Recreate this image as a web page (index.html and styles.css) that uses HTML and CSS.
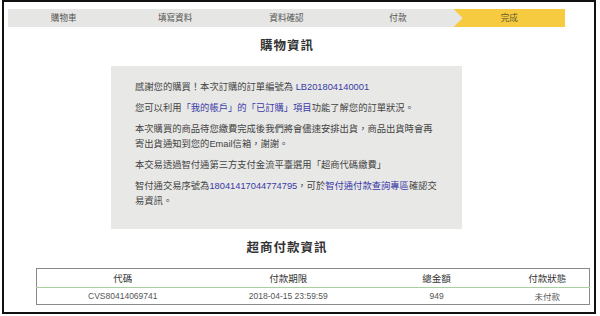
FILE: index.html
```html
<!DOCTYPE html>
<html lang="zh-Hant">
<head>
    <meta charset="UTF-8">
    <meta name="viewport" content="width=device-width, initial-scale=1.0">
    <title>購物資訊</title>
    <link rel="stylesheet" href="styles.css">
</head>
<body>
    <div class="frame">
        <ol class="steps">
            <li>購物車</li>
            <li>填寫資料</li>
            <li>資料確認</li>
            <li>付款</li>
            <li class="current">完成</li>
        </ol>
        <div class="main">
            <h2 class="title">購物資訊</h2>
            <div class="notice">
                <p>感謝您的購買！本次訂購的訂單編號為 <a class="link">LB201804140001</a></p>
                <p>您可以利用<a class="link">「我的帳戶」的「已訂購」項目</a>功能了解您的訂單狀況。</p>
                <p>本次購買的商品待您繳費完成後我們將會儘速安排出貨，商品出貨時會再寄出貨通知到您的Email信箱，謝謝。</p>
                <p>本交易透過智付通第三方支付金流平臺選用「超商代碼繳費」</p>
                <p>智付通交易序號為<a class="link">18041417044774795</a>，可於<a class="link">智付通付款查詢專區</a>確認交易資訊。</p>
            </div>
            <h2 class="title sub">超商付款資訊</h2>
        </div>
        <table class="pay">
            <thead>
                <tr>
                    <th class="c1">代碼</th>
                    <th class="c2">付款期限</th>
                    <th class="c3">總金額</th>
                    <th class="c4">付款狀態</th>
                </tr>
            </thead>
            <tbody>
                <tr>
                    <td>CVS80414069741</td>
                    <td>2018-04-15 23:59:59</td>
                    <td>949</td>
                    <td>未付款</td>
                </tr>
            </tbody>
        </table>
    </div>
</body>
</html>
```

FILE: styles.css
```css
body {
    margin: 0;
    background: #fff;
    font-family: "Liberation Sans", "Noto Sans CJK TC", sans-serif;
}
.frame {
    box-sizing: border-box;
    width: 594px;
    height: 314px;
    margin-left: 2px;
    border: 2px solid #111;
    padding: 7px 0 0 4px;
}
.steps {
    display: flex;
    width: 557px;
    height: 18px;
    margin: 0;
    padding: 0;
    list-style: none;
    background: #e6e6e4;
}
.steps li {
    flex: 1;
    text-align: center;
    font-size: 8.6px;
    line-height: 18px;
    color: #555;
}
.steps li.current {
    background: #f6cb3f;
    color: #6b5c2e;
    clip-path: polygon(0 0, 100% 0, 100% 100%, 0 100%, 9px 50%);
}
.main {
    width: 351px;
    margin-left: 103px;
}
.title {
    margin: 9px 0 0;
    font-size: 12.5px;
    line-height: 20px;
    letter-spacing: 1px;
    padding-left: 1px;
    text-align: center;
    color: #333;
    font-weight: bold;
}
.notice {
    margin-top: 10px;
    height: 163px;
    box-sizing: border-box;
    padding: 14px 23px 0 24px;
    background: #e8e8e6;
}
.notice p {
    margin: 0 0 6px;
    font-size: 9.3px;
    line-height: 15px;
    color: #444;
}
.link {
    color: #3a3aa6;
    text-decoration: none;
}
.pay {
    width: 554px;
    margin: 10px 0 0 28px;
    border-collapse: collapse;
    border: 1px solid #8a8a8a;
}
.pay th {
    height: 18px;
    padding: 0;
    font-size: 9.5px;
    font-weight: normal;
    color: #333;
    border-bottom: 1px solid #a9cfa0;
}
.pay td {
    height: 16px;
    padding: 0;
    text-align: center;
    font-size: 8.5px;
    color: #555;
}
.c1 { width: 172px; }
.c2 { width: 160px; }
.c3 { width: 138px; }
.c4 { width: 84px; }
```
